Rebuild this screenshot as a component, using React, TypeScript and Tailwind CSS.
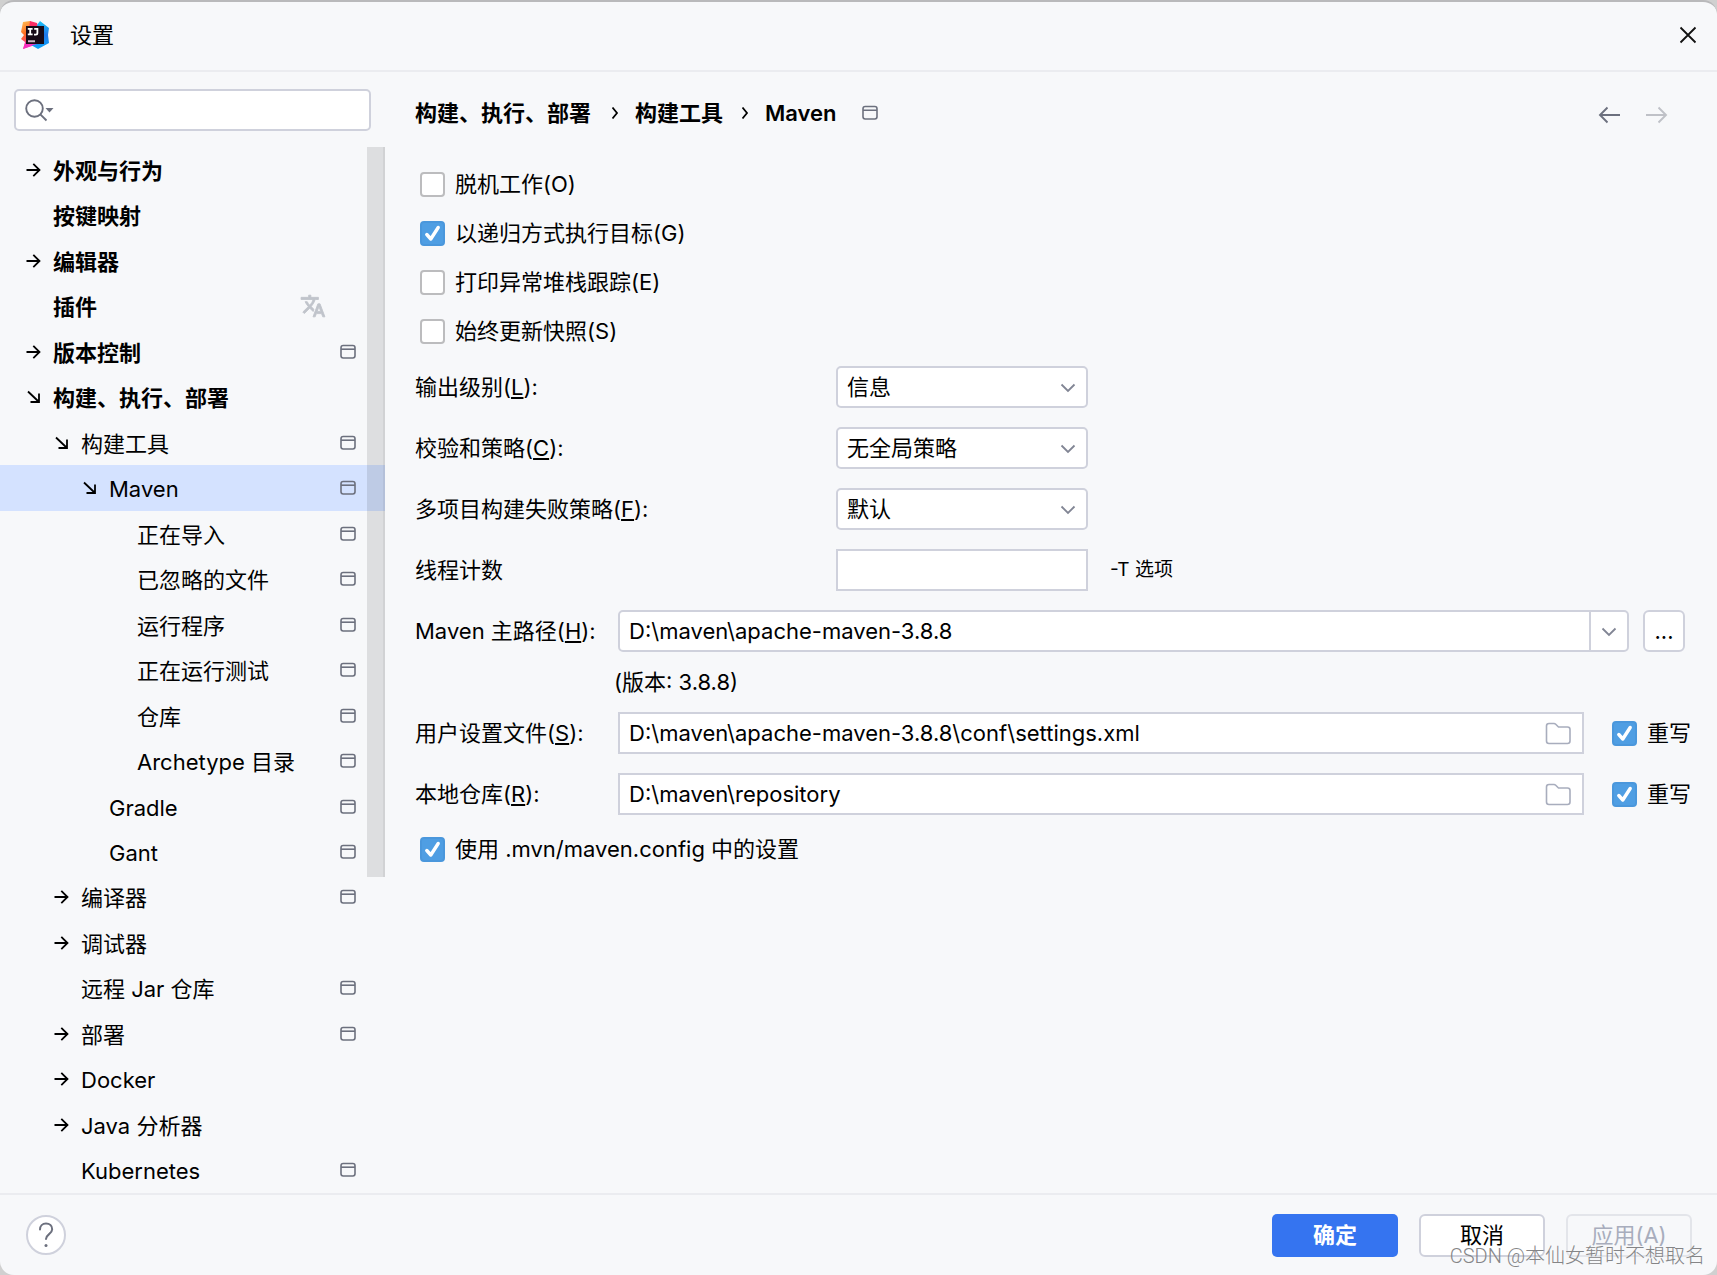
import { useState } from "react";
import type { ReactNode } from "react";
import clsx from "clsx";

interface TreeItem {
  label: string;
  level: number;
  arrow?: "right" | "open";
  bold?: boolean;
  project?: boolean;
  translate?: boolean;
}

const items: TreeItem[] = [
  { label: "外观与行为", level: 0, arrow: "right", bold: true },
  { label: "按键映射", level: 0, bold: true },
  { label: "编辑器", level: 0, arrow: "right", bold: true },
  { label: "插件", level: 0, bold: true, translate: true },
  { label: "版本控制", level: 0, arrow: "right", bold: true, project: true },
  { label: "构建、执行、部署", level: 0, arrow: "open", bold: true },
  { label: "构建工具", level: 1, arrow: "open", project: true },
  { label: "Maven", level: 2, arrow: "open", project: true },
  { label: "正在导入", level: 3, project: true },
  { label: "已忽略的文件", level: 3, project: true },
  { label: "运行程序", level: 3, project: true },
  { label: "正在运行测试", level: 3, project: true },
  { label: "仓库", level: 3, project: true },
  { label: "Archetype 目录", level: 3, project: true },
  { label: "Gradle", level: 2, project: true },
  { label: "Gant", level: 2, project: true },
  { label: "编译器", level: 1, arrow: "right", project: true },
  { label: "调试器", level: 1, arrow: "right" },
  { label: "远程 Jar 仓库", level: 1, project: true },
  { label: "部署", level: 1, arrow: "right", project: true },
  { label: "Docker", level: 1, arrow: "right" },
  { label: "Java 分析器", level: 1, arrow: "right" },
  { label: "Kubernetes", level: 1, project: true },
];

const indents = ["pl-6", "pl-[52px]", "pl-20", "pl-[108px]"];

function Logo() {
  return (
    <svg width="28" height="28" viewBox="0 0 28 28" aria-hidden="true">
      <defs>
        <linearGradient id="warm" x1="0" y1="0" x2="0.3" y2="1">
          <stop offset="0" stopColor="#fdc35a" />
          <stop offset="0.5" stopColor="#ff6a1f" />
          <stop offset="1" stopColor="#ff2fb4" />
        </linearGradient>
        <linearGradient id="cool" x1="0" y1="0" x2="0" y2="1">
          <stop offset="0" stopColor="#19c3f5" />
          <stop offset="0.5" stopColor="#2176ea" />
          <stop offset="1" stopColor="#0ba5f8" />
        </linearGradient>
      </defs>
      <path d="M2 1 L9 0 L14 4 L14 24 L2 28 L4 21 L0 18 L3 14 L0 11 Z" fill="url(#warm)" />
      <path d="M9 0 L16 2 L18 8 L8 8 Z" fill="#fc2d65" />
      <path d="M16 4 L19 0 L28 7 L27 14 L28 22 L17 28 L10 24 L20 18 Z" fill="url(#cool)" />
      <path d="M2 28 L5 20 L16 23 L12 24 Z" fill="#f62fc0" />
      <rect x="5" y="5" width="18" height="18" fill="#170a17" />
      <g fill="none" stroke="#fff" strokeWidth="1.8">
        <path d="M6.800 7.800h4.800M9.200 7.800v5.600M6.800 13.400h4.800M13.200 7.800h3.200v4.200q0 1.600-1.600 1.600h-1.800" />
      </g>
      <path d="M7 19.200h7v2H7z" fill="#c9b9c4" />
    </svg>
  );
}

function Arrow({ open }: { open?: boolean }) {
  return (
    <svg width="18" height="18" viewBox="0 0 18 18" fill="none" stroke="#000" strokeWidth="1.8">
      {open ? <path d="M4 3.5l10.500 10M15 5.500V14H6.500" /> : <path d="M2.500 9H15.500M9.300 2.800L15.500 9l-6.200 6.200" />}
    </svg>
  );
}

function ProjectIcon() {
  return (
    <svg className="shrink-0" width="18" height="18" viewBox="0 0 18 18" fill="none" stroke="#6c707e" strokeWidth="1.6">
      <rect x="2" y="2.500" width="14" height="12.500" rx="2.200" />
      <path d="M2 6.200h14" />
    </svg>
  );
}

function TranslateIcon() {
  return (
    <svg width="26" height="26" viewBox="0 0 24 24" fill="#c0c4cb" stroke="#c0c4cb" strokeWidth="0.8">
      <path d="M12.87 15.07l-2.54-2.51.03-.03A17.52 17.52 0 0 0 14.07 6H17V4h-7V2H8v2H1v2h11.17C11.5 7.92 10.44 9.75 9 11.35 8.07 10.32 7.3 9.19 6.69 8h-2c.73 1.63 1.73 3.17 2.98 4.56l-5.09 5.02L4 19l5-5 3.11 3.11.76-2.04zM18.5 10h-2L12 22h2l1.12-3h4.75L21 22h2l-4.5-12zm-2.62 7l1.62-4.33L19.12 17h-3.24z" />
    </svg>
  );
}

function Chevron() {
  return (
    <svg
      className="pointer-events-none"
      width="18"
      height="18"
      viewBox="0 0 18 18"
      fill="none"
      stroke="#818594"
      strokeWidth="1.8"
    >
      <path d="M2.500 6.500L9 13l6.500-6.500" />
    </svg>
  );
}

function FolderIcon() {
  return (
    <svg width="26" height="24" viewBox="0 0 26 24" fill="none" stroke="#a8adbd" strokeWidth="1.6">
      <path d="M1.500 20V5Q1.500 2.500 4 2.500H9q1 0 1.700.7L13.500 6H22.500Q25 6 25 8.500V20q0 2.500-2.500 2.500H4Q1.500 22.500 1.500 20Z" />
    </svg>
  );
}

function NavArrow({ back }: { back?: boolean }) {
  return (
    <svg width="24" height="24" viewBox="0 0 24 24" fill="none" stroke={back ? "#6c707e" : "#bfc1c7"} strokeWidth="1.9">
      {back ? <path d="M22 12H2M9.500 4.500L2 12l7.500 7.500" /> : <path d="M2 12h20M14.500 4.500L22 12l-7.500 7.500" />}
    </svg>
  );
}

function Check({ children, checked }: { children: ReactNode; checked?: boolean }) {
  const [on, setOn] = useState(!!checked);
  return (
    <label className="flex items-center gap-2.5 whitespace-nowrap">
      <span className="relative block size-[25px] shrink-0">
        <input
          type="checkbox"
          checked={on}
          onChange={(e) => setOn(e.target.checked)}
          className="block size-[25px] appearance-none rounded-[4px] border-2 border-[#bcbcbe] bg-white checked:border-[#4a97dc] checked:bg-[#4f9ee3]"
        />
        {on && (
          <svg
            className="pointer-events-none absolute inset-0"
            width="25"
            height="25"
            viewBox="0 0 25 25"
            fill="none"
            stroke="#fff"
            strokeWidth="3.4"
            strokeLinecap="round"
            strokeLinejoin="round"
          >
            <path d="M6.800 13.500l4 4.500L18.200 6.500" />
          </svg>
        )}
      </span>
      <span>{children}</span>
    </label>
  );
}

function Mnemonic({ text, letter }: { text: string; letter: string }) {
  return (
    <>
      {text}(<span className="underline decoration-2 underline-offset-2">{letter}</span>):
    </>
  );
}

function SelectRow({ id, text, letter, value }: { id: string; text: string; letter: string; value: string }) {
  return (
    <div className="flex h-[42px] items-center">
      <label htmlFor={id} className="w-[421px]">
        <Mnemonic text={text} letter={letter} />
      </label>
      <div className="relative w-[252px]">
        <select
          id={id}
          className="h-[42px] w-full appearance-none rounded-[5px] border-2 border-[#cfd1dc] bg-white pl-[9px] pr-10"
        >
          <option>{value}</option>
        </select>
        <span className="pointer-events-none absolute inset-y-0 right-[11px] flex items-center">
          <Chevron />
        </span>
      </div>
    </div>
  );
}

function PathRow({ id, text, letter, value }: { id: string; text: string; letter: string; value: string }) {
  return (
    <div className="flex items-center">
      <label htmlFor={id} className="w-[203px] shrink-0">
        <Mnemonic text={text} letter={letter} />
      </label>
      <div className="flex h-[42px] flex-1 items-center border-2 border-[#cfd1dc] bg-white pr-[11px]">
        <input id={id} defaultValue={value} className="min-w-0 flex-1 pl-[9px] outline-none" />
        <button aria-label="浏览">
          <FolderIcon />
        </button>
      </div>
      <div className="ml-7 mr-[26px]">
        <Check checked>重写</Check>
      </div>
    </div>
  );
}

export default function App() {
  const [selected, setSelected] = useState("Maven");

  return (
    <div className="h-screen bg-[#d0d0d0]">
      <div className="relative flex h-full flex-col overflow-hidden rounded-[14px] border-t-2 border-[#b9b9bb] bg-[#f7f8fa] font-[Inter,'Noto_Sans_CJK_SC',sans-serif] text-[22px] leading-8 text-black">
        {/* Title bar */}
        <header className="flex h-[70px] shrink-0 items-center border-b-2 border-[#ebecf0] pb-0.5 pl-[21px] pr-5">
          <Logo />
          <h1 className="ml-[21px] flex-1">设置</h1>
          <button aria-label="关闭">
            <svg width="18" height="18" viewBox="0 0 18 18" stroke="#111" strokeWidth="1.8">
              <path d="M1.500 1.500l15 15M16.500 1.500l-15 15" />
            </svg>
          </button>
        </header>

        <div className="flex min-h-0 flex-1">
          {/* Settings tree */}
          <aside className="flex w-[385px] shrink-0 flex-col pt-[17px]">
            <div className="ml-3.5 mr-3.5 flex h-[42px] shrink-0 items-center rounded-[5px] border-2 border-[#cfd1dc] bg-white pl-[9px]">
              <svg width="30" height="24" viewBox="0 0 30 24" fill="none" stroke="#6c707e" strokeWidth="1.900">
                <circle cx="9.500" cy="10.500" r="8.300" />
                <path d="M15.300 16.300L21.500 22.500" />
                <path d="M20.500 10h8l-4 4.500z" fill="#6c707e" stroke="none" />
              </svg>
              <input type="text" aria-label="搜索" className="min-w-0 flex-1 outline-none" />
            </div>
            <div className="relative mt-4 flex min-h-0 flex-1 flex-col">
              <ul className="flex min-h-0 flex-1 flex-col">
                {items.map((item) => (
                  <li key={item.label} className="min-h-0 flex-1">
                    <button
                      onClick={() => setSelected(item.label)}
                      className={clsx(
                        "flex h-full w-full items-center pr-7 text-left",
                        indents[item.level],
                        item.bold && "font-bold",
                        selected === item.label && "bg-[#d4e2ff]"
                      )}
                    >
                      <span className="w-[29px] shrink-0">
                        {item.arrow && <Arrow open={item.arrow === "open"} />}
                      </span>
                      <span className="flex-1 whitespace-nowrap pt-0.5">{item.label}</span>
                      {item.translate && (
                        <span className="mr-[31px]">
                          <TranslateIcon />
                        </span>
                      )}
                      {item.project && <ProjectIcon />}
                    </button>
                  </li>
                ))}
              </ul>
              <div className="pointer-events-none absolute right-0 top-0 h-[730px] w-[18px] border-r-2 border-black/5 bg-black/10" />
            </div>
          </aside>

          {/* Maven page */}
          <main className="min-w-0 flex-1 pl-[30px] pt-[25px]">
            <div className="flex h-8 items-center pr-[49px] font-semibold">
              <nav className="flex flex-1 items-center">
                <a href="#build">构建、执行、部署</a>
                <svg className="ml-5 mr-4" width="8" height="14" viewBox="0 0 8 14" fill="none" stroke="#000" strokeWidth="1.8">
                  <path d="M1.500 1.500L6 7l-4.500 5.500" />
                </svg>
                <a href="#tools">构建工具</a>
                <svg className="ml-[18px] mr-4" width="8" height="14" viewBox="0 0 8 14" fill="none" stroke="#000" strokeWidth="1.8">
                  <path d="M1.500 1.500L6 7l-4.500 5.500" />
                </svg>
                <span className="mr-6">Maven</span>
                <ProjectIcon />
              </nav>
              <div className="flex gap-[22px] pt-1">
                <button aria-label="后退">
                  <NavArrow back />
                </button>
                <button aria-label="前进" disabled>
                  <NavArrow />
                </button>
              </div>
            </div>

            <div className="mt-[39px] flex flex-col gap-[17px] pl-[5px]">
              <Check>脱机工作(O)</Check>
              <Check checked>以递归方式执行目标(G)</Check>
              <Check>打印异常堆栈跟踪(E)</Check>
              <Check>始终更新快照(S)</Check>
            </div>

            <div className="mt-[19px] flex flex-col gap-[19px]">
              <SelectRow id="level" text="输出级别" letter="L" value="信息" />
              <SelectRow id="checksum" text="校验和策略" letter="C" value="无全局策略" />
              <SelectRow id="fail" text="多项目构建失败策略" letter="F" value="默认" />
              <div className="flex items-center">
                <label htmlFor="threads" className="w-[421px]">
                  线程计数
                </label>
                <input id="threads" type="text" className="h-[42px] w-[252px] border-2 border-[#cfd1dc] bg-white px-[9px]" />
                <span className="ml-[22px] text-[19px]">-T 选项</span>
              </div>
              <div className="flex items-center">
                <label htmlFor="home" className="w-[203px] shrink-0">
                  <Mnemonic text="Maven 主路径" letter="H" />
                </label>
                <div className="flex h-[42px] flex-1 items-center rounded-[5px] border-2 border-[#cfd1dc] bg-white">
                  <input id="home" defaultValue="D:\maven\apache-maven-3.8.8" className="min-w-0 flex-1 pl-[9px] outline-none" />
                  <button aria-label="展开" className="flex h-full w-[38px] items-center justify-center border-l-2 border-[#cfd1dc]">
                    <Chevron />
                  </button>
                </div>
                <button className="ml-3.5 mr-8 size-[42px] rounded-[6px] border-2 border-[#cfd1dc] bg-white">...</button>
              </div>
            </div>

            <p className="ml-[199px] mt-3.5">(版本: 3.8.8)</p>
            <div className="mt-3.5 flex flex-col gap-[19px]">
              <PathRow id="settings" text="用户设置文件" letter="S" value="D:\maven\apache-maven-3.8.8\conf\settings.xml" />
              <PathRow id="repo" text="本地仓库" letter="R" value="D:\maven\repository" />
            </div>
            <div className="mt-[18px] pl-[5px]">
              <Check checked>使用 .mvn/maven.config 中的设置</Check>
            </div>
          </main>
        </div>

        <footer className="flex h-[82px] shrink-0 items-center border-t-2 border-[#ebecf0] pl-[26px] pr-[25px]">
          <button
            aria-label="帮助"
            className="flex size-10 items-center justify-center rounded-full border-2 border-[#cfd1dc] bg-white"
          >
            <svg width="16" height="26" viewBox="0 0 16 26" fill="none" stroke="#6c707e" strokeWidth="2" strokeLinecap="round">
              <path d="M2 7.500C2 4 4.500 1.500 8 1.500s6.200 2.300 6.200 5.700c0 4.800-6.200 5-6.200 9.800" />
              <circle cx="8" cy="23.500" r="1.500" fill="#6c707e" stroke="none" />
            </svg>
          </button>
          <div className="ml-auto flex gap-[21px]">
            <button className="h-[43px] w-[126px] rounded-[5px] bg-[#3574f0] font-bold text-white">确定</button>
            <button className="h-[43px] w-[126px] rounded-[6px] border-2 border-[#cfd1dc] bg-white">取消</button>
            <button disabled className="h-[43px] w-[126px] rounded-[6px] border-2 border-[#e3e5ea] text-[#a8adbd]">
              应用(A)
            </button>
          </div>
        </footer>
        <p className="pointer-events-none absolute bottom-1 right-3 font-[Roboto,'Noto_Sans_CJK_SC',sans-serif] text-xl font-light leading-[30px] text-[#858587]">
          CSDN @本仙女暂时不想取名
        </p>
      </div>
    </div>
  );
}
